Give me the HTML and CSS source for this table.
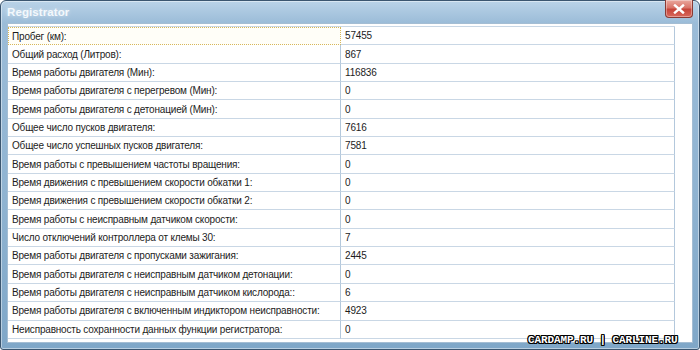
FILE: index.html
```html
<!DOCTYPE html>
<html lang="ru">
<head>
<meta charset="utf-8">
<title>Registrator</title>
<link rel="stylesheet" href="styles.css">
</head>
<body>
<div class="window">
  <div class="titlebar">
    <span class="title">Registrator</span>
    <button class="close" aria-label="Close">
      <svg width="12" height="10" viewBox="0 0 12 10"><path d="M2 1.5 L10 8.5 M10 1.5 L2 8.5" stroke="#fff" stroke-width="2.4" stroke-linecap="square"/></svg>
    </button>
  </div>
  <div class="panel">
    <div class="grid">
      <div class="cell label focus">Пробег (км):</div><div class="cell value">57455</div>
      <div class="cell label">Общий расход (Литров):</div><div class="cell value">867</div>
      <div class="cell label">Время работы двигателя (Мин):</div><div class="cell value">116836</div>
      <div class="cell label">Время работы двигателя с перегревом (Мин):</div><div class="cell value">0</div>
      <div class="cell label">Время работы двигателя с детонацией (Мин):</div><div class="cell value">0</div>
      <div class="cell label">Общее число пусков двигателя:</div><div class="cell value">7616</div>
      <div class="cell label">Общее число успешных пусков двигателя:</div><div class="cell value">7581</div>
      <div class="cell label">Время работы с превышением частоты вращения:</div><div class="cell value">0</div>
      <div class="cell label">Время движения с превышением скорости обкатки 1:</div><div class="cell value">0</div>
      <div class="cell label">Время движения с превышением скорости обкатки 2:</div><div class="cell value">0</div>
      <div class="cell label">Время работы с неисправным датчиком скорости:</div><div class="cell value">0</div>
      <div class="cell label">Число отключений контроллера от клемы 30:</div><div class="cell value">7</div>
      <div class="cell label">Время работы двигателя с пропусками зажигания:</div><div class="cell value">2445</div>
      <div class="cell label">Время работы двигателя с неисправным датчиком детонации:</div><div class="cell value">0</div>
      <div class="cell label">Время работы двигателя с неисправным датчиком кислорода::</div><div class="cell value">6</div>
      <div class="cell label">Время работы двигателя с включенным индиктором неисправности:</div><div class="cell value">4923</div>
      <div class="cell label">Неисправность сохранности данных функции регистратора:</div><div class="cell value">0</div>
    </div>
    <div class="watermark">CARDAMP.RU | CARLINE.RU</div>
  </div>
</div>
</body>
</html>
```

FILE: styles.css
```css
html, body {
  margin: 0;
  padding: 0;
  background: #ffffff;
}
body {
  font-family: "Liberation Sans", Arial, sans-serif;
}
.window {
  width: 700px;
  height: 350px;
  box-sizing: border-box;
  border: 1px solid #3b5670;
  border-radius: 6px 6px 3px 3px;
  background: linear-gradient(to bottom, #bad3e8 0px, #9bbcd8 22px, #8fb3d1 200px, #7fa7c8 100%);
  box-shadow: inset 0 0 0 1px rgba(255,255,255,0.45);
  padding: 0 6px 6px 6px;
  display: flex;
  flex-direction: column;
}
.titlebar {
  height: 22px;
  flex: 0 0 22px;
  display: flex;
  justify-content: space-between;
  align-items: flex-start;
}
.title {
  margin-top: 5px;
  font-size: 11.5px;
  font-weight: bold;
  color: #f3f8fc;
  text-shadow: 0 0 4px rgba(255,255,255,0.5);
  letter-spacing: 0.1px;
}
.close {
  width: 28px;
  height: 18px;
  margin: -1px 0 0 0;
  padding: 0;
  border: 1px solid #8a3a33;
  border-top: none;
  border-radius: 0 0 4px 4px;
  background: linear-gradient(to bottom, #eaa89e 0%, #d9756a 45%, #c6453a 55%, #d8685c 100%);
  box-shadow: inset 0 0 0 1px rgba(255,255,255,0.35);
  display: flex;
  align-items: center;
  justify-content: center;
}
.panel {
  flex: 1;
  position: relative;
  background: #ffffff;
  border: 1px solid #a4bdd3;
  padding-top: 2px;
}
.grid {
  display: grid;
  grid-template-columns: 333px 334px;
  grid-auto-rows: 18.35px;
  width: max-content;
  border-top: 1px solid #c9d7e5;
}
.cell {
  box-sizing: border-box;
  border-bottom: 1px solid #c9d7e5;
  border-right: 1px solid #b3c8dc;
  font-size: 10px;
  letter-spacing: -0.18px;
  color: #1c1c1c;
  display: flex;
  align-items: center;
  white-space: nowrap;
}
.label {
  padding-left: 4px;
}
.value {
  padding-left: 4px;
}
.focus {
  border: 1px dotted #d7b75a;
  padding-left: 3px;
  background: #fffef8;
}
.watermark {
  position: absolute;
  left: 520px;
  top: 310px;
  font-family: "Liberation Mono", "DejaVu Sans Mono", monospace;
  font-weight: bold;
  font-size: 11px;
  letter-spacing: -0.1px;
  color: #ffffff;
  text-shadow: 1px 0 0 #000, -1px 0 0 #000, 0 1px 0 #000, 0 -1px 0 #000, 1px 1px 0 #000, -1px -1px 0 #000, 1px -1px 0 #000, -1px 1px 0 #000;
}
```
